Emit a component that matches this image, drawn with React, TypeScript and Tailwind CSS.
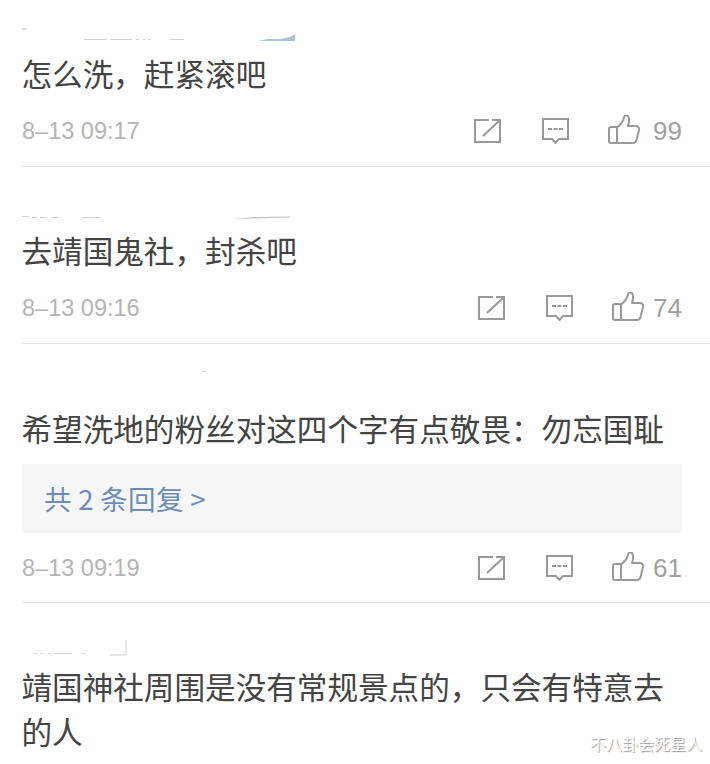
const ShareIcon = () => (
  <svg width="27" height="24" viewBox="0 0 27 24" fill="none" stroke="#999" strokeWidth="2">
    <path d="M15 1H1v22h25V9" />
    <path d="M9 17 25 2M18 1h8v8" />
  </svg>
);

const CommentIcon = () => (
  <svg width="27" height="26" viewBox="0 0 27 26" fill="none" stroke="#999" strokeWidth="2">
    <path d="M1 1h25v20h-9l-3.500 4-3.500-4H1z" />
    <path d="M6 11h4M11.500 11h4M17 11h4" />
  </svg>
);

const ThumbIcon = () => (
  <svg width="32" height="30" viewBox="0 0 32 30" fill="none" stroke="#999" strokeWidth="2" strokeLinejoin="round">
    <path d="M9 12h-6a2 2 0 0 0-2 2v12a2 2 0 0 0 2 2h22c2 0 3-1 3.500-3l2.500-10c.5-2.500-1-4-3-4h-8c1-3 1.500-6 .5-9-.8-2-4-2-4.500.5-.5 3-2 6-6.500 9.500z" />
    <path d="M9 12v16" />
  </svg>
);

function Meta({ time, likes, gap }: { time: string; likes: number; gap: string }) {
  return (
    <div className="mt-[19px] flex items-center justify-between pr-[28px]">
      <span className="text-[23.500px] leading-[30px] text-[#b4b4b4] font-['Liberation_Sans',sans-serif]">{time}</span>
      <div className="flex items-center">
        <ShareIcon />
        <div className="ml-[41px]">
          <CommentIcon />
        </div>
        <div className="ml-[39px] mb-[2px]">
          <ThumbIcon />
        </div>
        <span className={`${gap} text-[26px] leading-[30px] text-[#a0a0a0] font-['Liberation_Sans',sans-serif]`}>{likes}</span>
      </div>
    </div>
  );
}

export default function App() {
  return (
    <div className="relative h-[764px] overflow-hidden bg-white pl-[22px] text-[30.600px] text-[#444] font-['Noto_Sans_CJK_SC',sans-serif]">
      {/* Comment 1 */}
      <div className="h-[167px] border-b border-[#e6e6e6] pt-[27px]">
        {/* cut-off name row */}
        <svg width="280" height="14" viewBox="0 0 280 14" className="block">
          <path d="M0 2h5" stroke="#bbb" />
          <path d="M62 12.500h23M88 12.500h22M114 12.500h3M121 12.500h2M126 12.500h3M148 12.500h14" stroke="#d2d2d2" />
          <path d="M236 14 262 14 273 14V7L268 10 258 12 246 12Z" fill="#a9c0dc" />
        </svg>
        <p className="mt-[10px] -ml-[0.5px] leading-[45px]">怎么洗，赶紧滚吧</p>
        <Meta time="8–13 09:17" likes={99} gap="ml-[13px]" />
      </div>

      {/* Comment 2 */}
      <div className="h-[177px] border-b border-[#e6e6e6] pt-[48px]">
        <svg width="280" height="5" viewBox="0 0 280 5" className="block">
          <path d="M0 1.500h7M10 2.500h5M18 2.500h7M30 2.500h6M60 2.500h18" stroke="#d0d0d0" />
          <path d="M211 4 232 2 268 1.500V2.500L232 3.500Z" fill="#c4c4c4" />
        </svg>
        <p className="mt-[8px] -ml-[0.5px] leading-[45px]">去靖国鬼社，封杀吧</p>
        <Meta time="8–13 09:16" likes={74} gap="ml-[9px]" />
      </div>

      {/* Comment 3 */}
      <div className="h-[259px] border-b border-[#e6e6e6] pt-[27px]">
        <div className="ml-[180px] h-px w-[4px] bg-[#ddd]" />
        <p className="mt-[34px] -ml-[0.5px] leading-[45px]">希望洗地的粉丝对这四个字有点敬畏：勿忘国耻</p>
        <div className="mt-[13px] mr-[28px] flex h-[69px] items-center bg-[#f6f6f6] pl-[22px] text-[27.500px] tracking-[0.3px] text-[#6a8db8]">
          共 2 条回复 &gt;
        </div>
        <Meta time="8–13 09:19" likes={61} gap="ml-[9px]" />
      </div>

      {/* Comment 4 */}
      <div className="pt-[35px]">
        <svg width="110" height="18" viewBox="0 0 110 18" className="block">
          <path d="M12 15.500h3M18 15.500h3M26 15.500h3M32 15.500h18M60 15.500h3" stroke="#d4d4d4" />
          <path d="M88 17h16V2" stroke="#d0d0d0" fill="none" />
        </svg>
        <p className="mt-[8px] mr-[40px] -ml-[0.5px] leading-[45px]">靖国神社周围是没有常规景点的，只会有特意去的人</p>
      </div>

      <span className="absolute right-[8px] top-[733px] text-[16px] leading-[20px] text-white [text-shadow:1px_1px_1px_#999]">
        不八卦会死星人
      </span>
    </div>
  );
}
